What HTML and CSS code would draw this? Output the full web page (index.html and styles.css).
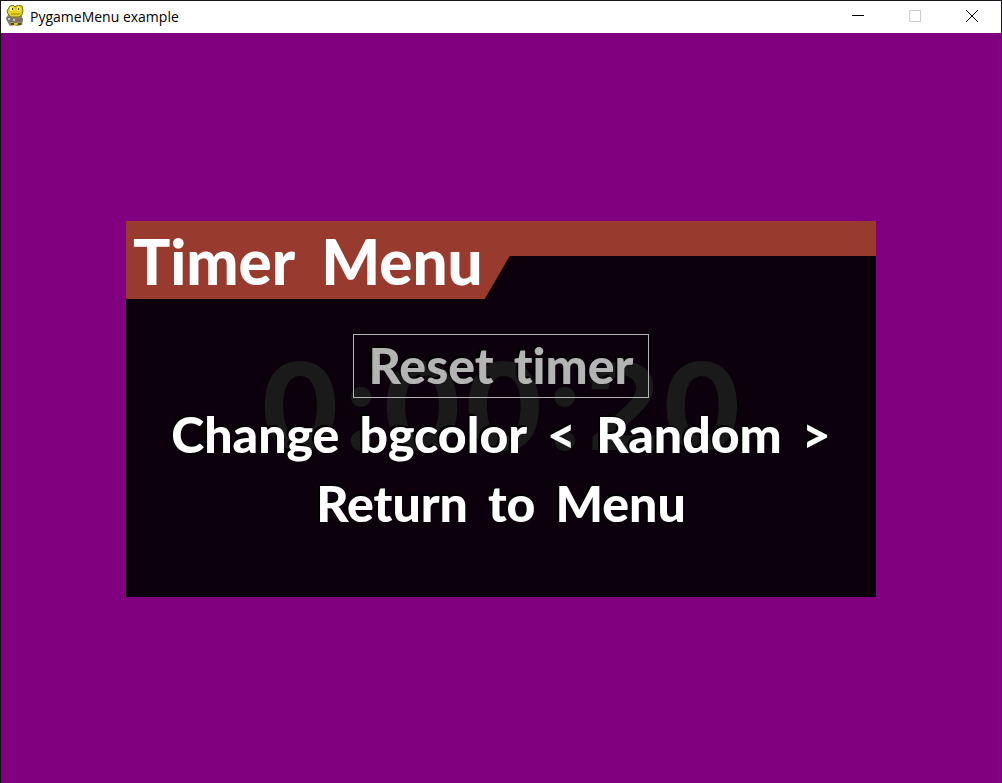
FILE: index.html
```html
<!DOCTYPE html>
<html lang="en">
<head>
<meta charset="utf-8">
<title>PygameMenu example</title>
<link rel="stylesheet" href="styles.css">
</head>
<body>
<div class="window">
  <header class="titlebar">
    <svg class="app-icon" viewBox="0 0 20 22" aria-hidden="true">
      <path d="M3 10 L1 13 L3 18 L5 21 L9 20 L12 21 L17 20 L18 15 L16 9z" fill="#8b8568"/>
      <path d="M5 1 L8 0 L10 2 L13 0 L17 1 L18 5 L17 10 L14 12 L6 12 L3 9 L2 6z" fill="#e8d51f" stroke="#786c22"/>
      <path d="M6 14 L15 14 L14 20 L12 19 L11 21 L6 20z" fill="#d4c425"/>
      <path d="M5 2h3v4H5zM12 2h3v4h-3z" fill="#fff36a"/>
      <path d="M7 3h1v2H7zM13 3h1v2h-1z" fill="#393724"/>
      <path d="M6 9h9" stroke="#9a841c"/>
      <path d="M1 13 L5 11 L9 14 L18 13 L17 17 L10 18 L2 16z" fill="#77776f"/>
      <path d="M3 13h2v2H3zM8 14h2v2H8z" fill="#c9c9c1"/>
      <path d="M12 14h2v2h-2z" fill="#b74d3b"/>
      <path d="M6 18h3v2H6zM13 18h3v2h-3z" fill="#4c4822"/>
    </svg>
    <h1 class="app-name">PygameMenu example</h1>
    <div class="controls">
      <button class="control" aria-label="Minimize"><svg viewBox="0 0 12 12"><path d="M0 5.5h12"/></svg></button>
      <button class="control" aria-label="Maximize" disabled><svg viewBox="0 0 12 12"><path d="M.5.5h11v11H.5z"/></svg></button>
      <button class="control" aria-label="Close"><svg viewBox="0 0 12 12"><path d="M0 0l12 12M12 0L0 12"/></svg></button>
    </div>
  </header>
  <main class="stage">
    <section class="menu">
      <div class="menu-head"><h2 class="menu-title"><span>Timer</span> <span>Menu</span></h2></div>
      <div class="timer">0:00:20</div>
      <div class="items">
        <button class="item selected"><span>Reset</span> <span>timer</span></button>
        <button class="item"><span>Change</span> <span>bgcolor</span> <span>&lt;</span> <span>Random</span> <span>&gt;</span></button>
        <button class="item"><span>Return</span> <span>to</span> <span>Menu</span></button>
      </div>
    </section>
  </main>
</div>
</body>
</html>
```
FILE: styles.css
```css
* { box-sizing: border-box; }
body { margin: 0; }
.window {
  display: flex;
  flex-direction: column;
  min-height: 100vh;
  border: 1px solid #18131c;
  border-bottom: 0;
  background: #800080;
}
.titlebar {
  display: flex;
  align-items: center;
  height: 32px;
  padding: 0 1px 2px 4px;
  background: #fff;
}
.app-icon { width: 20px; height: 22px; }
.app-name {
  margin: 0 0 0 5px;
  font: 400 14px "Open Sans", "Noto Sans", sans-serif;
  color: #000;
}
.controls { display: flex; margin-left: auto; }
.control {
  display: grid;
  place-items: center;
  width: 57px;
  height: 30px;
  padding: 0;
  border: 0;
  background: none;
}
.control svg {
  width: 12px;
  height: 12px;
  fill: none;
  stroke: #000;
  overflow: visible;
}
.control:disabled svg { stroke: #ccc; }
.stage {
  flex: 1;
  display: grid;
  place-items: center;
  padding-top: 2px;
}
.menu {
  position: relative;
  width: 75%;
  padding-bottom: 61px;
  background: #0b000c;
  font-family: Lato, sans-serif;
  font-weight: 900;
  font-variant-ligatures: none;
}
.menu-head {
  display: flex;
  background: linear-gradient(#993a2f, #993a2f) top / 100% 35px no-repeat;
}
.menu-title {
  display: flex;
  gap: 26px;
  margin: 0;
  padding: 3px 27px 0 7px;
  height: 78px;
  background: #993a2f;
  clip-path: polygon(0 0, 100% 0, 100% 35px, calc(100% - 25px) 100%, 0 100%);
  font-size: 62px;
  font-weight: 900;
  line-height: 74px;
  color: #fff;
}
.timer {
  position: absolute;
  inset: 110px 0 auto;
  text-align: center;
  font-family: Inter, sans-serif;
  font-size: 121px;
  font-weight: 700;
  line-height: 150px;
  color: #1a1a1a;
}
.items {
  position: relative;
  display: flex;
  flex-direction: column;
  align-items: center;
  gap: 5px;
  padding-top: 35px;
}
.item {
  display: flex;
  gap: 20px;
  height: 64px;
  padding: 0 12px 2px;
  border: 1px solid transparent;
  background: none;
  font: 900 50px/60px Lato, sans-serif;
  font-variant-ligatures: none;
  color: #fff;
  text-shadow: -2px -2px #000;
}
.selected {
  padding: 0 15px 2px;
  border-color: #b4b4b4;
  color: #b4b4b4;
}
```
